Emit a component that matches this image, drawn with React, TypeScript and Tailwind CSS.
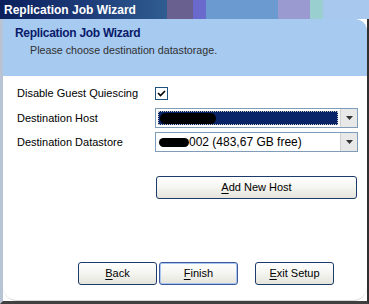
function Combo({ selected, children }: { selected?: boolean; children: React.ReactNode }) {
  return (
    <div className="flex h-[20px] w-[203px] items-stretch border border-[#7f9db9] bg-white">
      <div className="flex flex-1 items-center p-[2px]">
        <div
          className={
            selected
              ? 'flex h-full w-full items-center border border-dotted border-[#c0c0c0] bg-[#0a246a] pl-[1px]'
              : 'flex h-full w-full items-center pl-[1px]'
          }
        >
          {children}
        </div>
      </div>
      <div className="flex w-[17px] items-center justify-center border-l border-[#d0d0d0] bg-[#e8e8e8]">
        <svg width="7" height="4" viewBox="0 0 7 4">
          <path d="M0 0h7L3.5 4z" fill="#333" />
        </svg>
      </div>
    </div>
  )
}

function Blob({ w, h }: { w: number; h: number }) {
  return <span className="inline-block rounded-full bg-black" style={{ width: w, height: h }} />
}

function Btn({ label, u, focus, wide }: { label: string; u: string; focus?: boolean; wide?: boolean }) {
  const rest = label.slice(1)
  return (
    <div
      className={
        (wide ? 'w-[201px] ' : 'w-[79px] ') +
        'flex h-[23px] items-center justify-center rounded-[3px] border bg-gradient-to-b from-[#ffffff] via-[#f4f4f0] to-[#e4e4dc] text-[11px] text-black ' +
        (focus ? 'border-[#3c5a9a] shadow-[inset_0_0_0_1px_#a8c4f0]' : 'border-[#1c3a6a]')
      }
    >
      <span className="underline decoration-1 underline-offset-[2px]">{u}</span>
      {rest}
    </div>
  )
}

export default function App() {
  return (
    <div className="relative flex h-[304px] w-[369px] flex-col overflow-hidden bg-white font-['Liberation_Sans',Arial,sans-serif]">
      {/* title bar */}
      <div className="flex h-[19px] shrink-0">
        <div className="flex flex-1 items-center bg-gradient-to-r from-[#0a1f5c] via-[#1d3a78] to-[#2f5d90] pl-[4px] text-[12px] font-bold text-white">
          Replication Job Wizard
        </div>
        <div className="w-[26px] bg-[#6a6090]" />
        <div className="w-[13px] bg-[#6a6acc]" />
        <div className="w-[72px] bg-[#6a9ad0]" />
        <div className="w-[32px] bg-[#9a9ad0]" />
        <div className="w-[13px] bg-[#9acfd0]" />
        <div className="w-[46px] bg-[#a8c8ee]" />
      </div>

      {/* body */}
      <div className="flex flex-1 border-b-[3px] border-l-[3px] border-r-[2px] border-b-[#404040] border-l-[#b8c4d4] border-r-[#303030]">
        <div className="flex flex-1 flex-col overflow-hidden rounded-tr-[12px] rounded-b-[14px] border-b border-[#d8d8d8]">
          <div className="flex h-[57px] shrink-0 flex-col bg-[#a6caf0] pl-[12px] pt-[7px]">
            <div className="text-[12px] font-bold leading-[14px] tracking-[-0.3px] text-[#0a1a6a]">Replication Job Wizard</div>
            <div className="mt-[4px] pl-[15px] text-[10.7px] leading-[13px] text-[#303030]">
              Please choose destination datastorage.
            </div>
          </div>

          <div className="flex flex-1 flex-col pl-[14px] pt-[11px] text-[11px] text-black">
            <div className="flex h-[13px] items-center">
              <span className="w-[138px]">Disable Guest Quiescing</span>
              <div className="flex h-[13px] w-[13px] items-center justify-center border border-[#1c5180] bg-white">
                <svg width="9" height="9" viewBox="0 0 9 9">
                  <path d="M1 4l2.5 2.5L8 2" stroke="#000" strokeWidth="1.6" fill="none" />
                </svg>
              </div>
            </div>
            <div className="mt-[8px] flex h-[20px] items-center">
              <span className="w-[138px]">Destination Host</span>
              <Combo selected>
                <Blob w={56} h={11} />
              </Combo>
            </div>
            <div className="mt-[4px] flex h-[20px] items-center">
              <span className="w-[138px]">Destination Datastore</span>
              <Combo>
                <Blob w={30} h={9} />
                <span className="text-[12px]">002 (483,67 GB free)</span>
              </Combo>
            </div>
            <div className="mt-[24px] pl-[139px]">
              <Btn label="Add New Host" u="A" wide />
            </div>
            <div className="mt-[63px] flex pl-[61px]">
              <Btn label="Back" u="B" />
              <div className="w-[2px]" />
              <Btn label="Finish" u="F" focus />
              <div className="w-[17px]" />
              <Btn label="Exit Setup" u="E" />
            </div>
          </div>
        </div>
      </div>
    </div>
  )
}
